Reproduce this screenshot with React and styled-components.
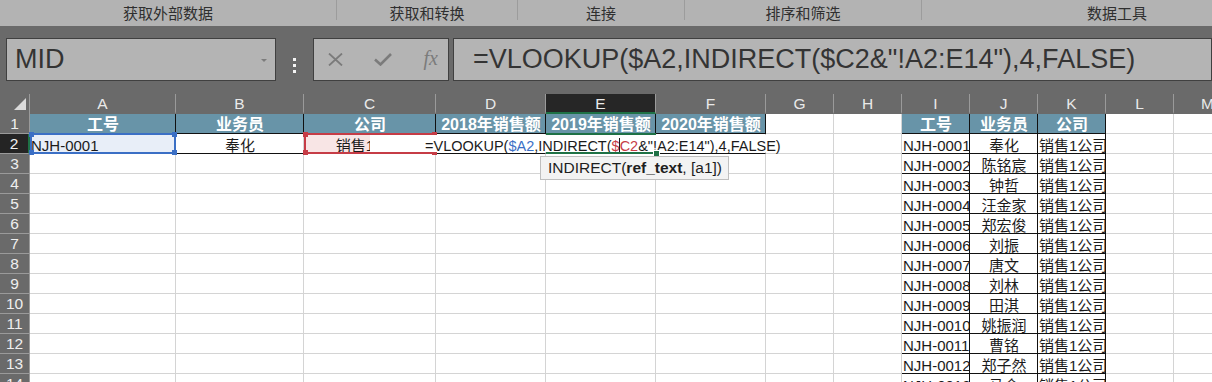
import React from "react";
import styled, { createGlobalStyle, css } from "styled-components";

const sans = `"Liberation Sans", "Noto Sans CJK SC", sans-serif`;

const GlobalStyle = createGlobalStyle`
  html, body {
    margin: 0;
    padding: 0;
    background: #ffffff;
  }
  body {
    font-family: ${sans};
    overflow: hidden;
  }
`;

const Page = styled.div`
  width: 1212px;
  height: 382px;
  overflow: hidden;
  display: flex;
  flex-direction: column;
  background: #ffffff;
`;

/* ---------- ribbon group labels ---------- */
const Ribbon = styled.div`
  display: flex;
  align-items: flex-start;
  height: 26px;
  flex-shrink: 0;
  background: #b3b3b3;
  overflow: hidden;
`;

const RibbonGroup = styled.div`
  box-sizing: border-box;
  width: ${(p) => p.$w}px;
  height: 20px;
  flex-shrink: 0;
  padding-top: 4px;
  line-height: 20px;
  text-align: center;
  font-size: 15px;
  color: #2f2f2f;
  border-right: ${(p) => (p.$last ? "none" : "1px solid #9c9c9c")};
`;

/* ---------- formula bar ---------- */
const FormulaBar = styled.div`
  display: flex;
  align-items: flex-start;
  height: 68px;
  flex-shrink: 0;
  padding: 12px 0 0 6px;
  box-sizing: border-box;
  background: #6a6a6a;
`;

const Box = styled.div`
  box-sizing: border-box;
  height: 43px;
  flex-shrink: 0;
  background: #b4b4b4;
  border: 1px solid #404040;
  display: flex;
  align-items: center;
`;

const NameBox = styled(Box)`
  width: 270px;
  padding: 0 8px 0 8px;
  justify-content: space-between;
  font-size: 27px;
  color: #343434;
`;

const Caret = styled.span`
  width: 0;
  height: 0;
  border-left: 3px solid transparent;
  border-right: 3px solid transparent;
  border-top: 3px solid #7c7c7c;
  margin-top: 2px;
`;

const Grip = styled.div`
  width: 37px;
  align-self: center;
  display: flex;
  flex-direction: column;
  align-items: center;
  gap: 3px;
  margin-top: -2px;
`;

const GripDot = styled.span`
  width: 3px;
  height: 3px;
  background: #f4f4f4;
`;

const Actions = styled(Box)`
  width: 136px;
  margin-right: 4px;
  padding: 0 10px 0 14px;
  justify-content: space-between;
`;

const Fx = styled.span`
  font-family: "Liberation Serif", serif;
  font-style: italic;
  font-size: 20px;
  color: #7b7b7b;
  margin-top: -2px;
`;

const FormulaBox = styled(Box)`
  flex: 1;
  padding-left: 19px;
  font-size: 27px;
  color: #343434;
  white-space: nowrap;
`;

/* ---------- sheet grid ---------- */
const Sheet = styled.div`
  display: grid;
  grid-template-columns: 30px 146px 128px 132px 110px 110px 110px 68px 68px 68px 68px 68px 68px 68px;
  grid-auto-rows: 20px;
  font-size: 15px;
`;

const Corner = styled.div`
  background: #6a6a6a;
  border-right: 1px solid #9a9a9a;
  display: flex;
  align-items: flex-end;
  justify-content: flex-end;
  padding: 0 3px 4px 0;
  box-sizing: border-box;
`;

const CornerTri = styled.span`
  width: 12px;
  height: 12px;
  background: #dadada;
  clip-path: polygon(100% 0, 100% 100%, 0 100%);
`;

const ColHead = styled.div`
  box-sizing: border-box;
  display: flex;
  align-items: center;
  justify-content: center;
  padding-top: 1px;
  font-size: 15.5px;
  color: #e9e9e9;
  background: ${(p) => (p.$active ? "#262626" : "#6a6a6a")};
  border-right: 1px solid #9a9a9a;
  border-bottom: 2px solid ${(p) => (p.$active ? "#1e7145" : "#6a6a6a")};
`;

const RowHead = styled.div`
  box-sizing: border-box;
  display: flex;
  align-items: center;
  justify-content: center;
  padding-top: 1px;
  color: #efefef;
  font-size: 15.5px;
  background: ${(p) => (p.$active ? "#242424" : "#6a6a6a")};
  border-bottom: 1px solid #9a9a9a;
  border-right: ${(p) => (p.$active ? "2px solid #1e7145" : "1px solid #9a9a9a")};
`;

const kinds = {
  grid: css``,
  head: css`
    background: #6894a8;
    color: #ffffff;
    font-weight: 700;
    font-size: 16px;
    padding-top: 2px;
    border-right-color: #111;
    border-bottom-color: #111;
  `,
  body: css`
    border-right-color: #111;
    border-bottom-color: #111;
  `,
  edge: css`
    border-bottom-color: #111;
  `,
};

const Cell = styled.div`
  box-sizing: border-box;
  position: ${(p) => (p.$pos ? "relative" : "static")};
  padding: 3px 0 0 1px;
  line-height: 18px;
  white-space: nowrap;
  color: #1b1b1b;
  background: ${(p) => p.$fill || "#ffffff"};
  text-align: ${(p) => p.$align || "left"};
  border-right: 1px solid #d4d4d4;
  border-bottom: 1px solid #d4d4d4;
  ${(p) => kinds[p.$kind || "grid"]}
`;

const Frame = styled.div`
  position: absolute;
  top: -1px;
  left: 0;
  right: -1px;
  bottom: -1px;
  border: 2px solid ${(p) => p.$c};
  z-index: 2;
`;

const Handle = styled.span`
  position: absolute;
  width: 5px;
  height: 5px;
  background: ${(p) => p.$c};
  ${(p) => (p.$top ? "top: -3px;" : "bottom: -3px;")}
  ${(p) => (p.$left ? "left: -3px;" : "right: -3px;")}
`;

const Editor = styled.div`
  position: absolute;
  left: 66px;
  top: 1px;
  width: 412px;
  height: 17px;
  box-sizing: border-box;
  padding: 2px 0 0 55px;
  background: #ffffff;
  font-size: 14.5px;
  line-height: 18px;
  color: #1b1b1b;
  text-align: left;
  z-index: 3;
  white-space: nowrap;
`;

const Ref = styled.span`
  color: ${(p) => p.$c};
`;

const TextCaret = styled.span`
  display: inline-block;
  width: 1px;
  height: 15px;
  background: #1b1b1b;
  vertical-align: -2px;
  margin: 0 -0.5px;
`;

const ActiveFrame = styled.div`
  position: absolute;
  top: -1px;
  left: 0;
  right: -1px;
  bottom: -1px;
  border-top: 2px solid #1e7145;
  border-bottom: 2px solid #1e7145;
  z-index: 4;
`;

const FillHandle = styled.span`
  position: absolute;
  right: -3px;
  bottom: -4px;
  width: 5px;
  height: 5px;
  background: #1e7145;
  outline: 1px solid #ffffff;
`;

const Tip = styled.div`
  position: absolute;
  left: -6px;
  top: 22px;
  height: 24px;
  box-sizing: border-box;
  padding: 0 6px 0 7px;
  background: #f3f3f3;
  border: 1px solid #bfbfbf;
  font-size: 15.5px;
  line-height: 22px;
  color: #1e1e1e;
  z-index: 5;
  white-space: nowrap;
`;

const Strong = styled.b`
  font-weight: 700;
`;

const COLS = ["A", "B", "C", "D", "E", "F", "G", "H", "I", "J", "K", "L", "M"];
const GROUPS = [
  { w: 337, label: "获取外部数据" },
  { w: 181, label: "获取和转换" },
  { w: 167, label: "连接" },
  { w: 237, label: "排序和筛选" },
  { w: 390, label: "数据工具", last: true },
];
const PEOPLE = [
  "奉化", "陈铭宸", "钟哲", "汪金家", "郑宏俊", "刘振", "唐文",
  "刘林", "田淇", "姚振润", "曹铭", "郑子然", "马会",
];
const HEADS = ["工号", "业务员", "公司", "2018年销售额", "2019年销售额", "2020年销售额"];
const FORMULA = '=VLOOKUP($A2,INDIRECT($C2&"!A2:E14"),4,FALSE)';

const Corners = ({ c }) => (
  <>
    <Handle $c={c} $top $left />
    <Handle $c={c} $top />
    <Handle $c={c} $left />
    <Handle $c={c} />
  </>
);

const cellsFor = (r) => {
  const cells = COLS.map(() => ({ kind: "grid" }));
  if (r === 1) {
    HEADS.forEach((t, i) => (cells[i] = { kind: "head", text: t, align: "center" }));
    HEADS.slice(0, 3).forEach((t, i) => (cells[8 + i] = { kind: "head", text: t, align: "center" }));
    return cells;
  }
  const n = r - 1;
  if (n <= PEOPLE.length) {
    cells[8] = { kind: "body", text: `NJH-${String(n).padStart(4, "0")}` };
    cells[9] = { kind: "body", text: PEOPLE[n - 1], align: "center" };
    cells[10] = { kind: "body", text: "销售1公司" };
  }
  return cells;
};

const RowTwoLeft = () => (
  <>
    <Cell $kind="edge" $fill="#e8eef8" $pos>
      NJH-0001
      <Frame $c="#3b6fc5">
        <Corners c="#3b6fc5" />
      </Frame>
    </Cell>
    <Cell $kind="edge" $align="center">奉化</Cell>
    <Cell $kind="edge" $align="center" $fill="#f8e5e5" $pos>
      销售1公司
      <Frame $c="#c63c46">
        <Corners c="#c63c46" />
      </Frame>
      <Editor>
        =VLOOKUP(<Ref $c="#3b6fc5">$A2</Ref>,INDIRECT(
        <Ref $c="#c63c46">$</Ref>
        <TextCaret />
        <Ref $c="#c63c46">C2</Ref>
        {'&"!A2:E14"),4,FALSE)'}
      </Editor>
    </Cell>
    <Cell $kind="edge" />
    <Cell $kind="edge" $pos>
      <ActiveFrame>
        <FillHandle />
      </ActiveFrame>
      <Tip>
        INDIRECT(<Strong>ref_text</Strong>, [a1])
      </Tip>
    </Cell>
    <Cell $kind="edge" />
  </>
);

const App = () => {
  const rows = Array.from({ length: 14 }, (_, i) => i + 1);
  return (
    <Page>
      <GlobalStyle />
      <Ribbon>
        {GROUPS.map((g) => (
          <RibbonGroup key={g.label} $w={g.w} $last={g.last}>
            {g.label}
          </RibbonGroup>
        ))}
      </Ribbon>

      <FormulaBar>
        <NameBox>
          MID
          <Caret />
        </NameBox>
        <Grip>
          <GripDot />
          <GripDot />
          <GripDot />
        </Grip>
        <Actions>
          <svg width="15" height="13" viewBox="0 0 15 13">
            <path d="M1 0.5 L14 12.5 M14 0.5 L1 12.5" stroke="#7b7b7b" strokeWidth="1.8" fill="none" />
          </svg>
          <svg width="18" height="13" viewBox="0 0 18 13">
            <path d="M1 6.5 L6.5 11.5 L17 1" stroke="#7b7b7b" strokeWidth="2.6" fill="none" />
          </svg>
          <Fx>fx</Fx>
        </Actions>
        <FormulaBox>{FORMULA}</FormulaBox>
      </FormulaBar>

      <Sheet>
        <Corner>
          <CornerTri />
        </Corner>
        {COLS.map((c) => (
          <ColHead key={c} $active={c === "E"}>
            {c}
          </ColHead>
        ))}
        {rows.map((r) => {
          const cells = cellsFor(r);
          return (
            <React.Fragment key={r}>
              <RowHead $active={r === 2}>{r}</RowHead>
              {r === 2 && <RowTwoLeft />}
              {cells.map((cell, i) =>
                r === 2 && i < 6 ? null : (
                  <Cell key={COLS[i]} $kind={cell.kind} $align={cell.align}>
                    {cell.text}
                  </Cell>
                )
              )}
            </React.Fragment>
          );
        })}
      </Sheet>
    </Page>
  );
};

export default App;
